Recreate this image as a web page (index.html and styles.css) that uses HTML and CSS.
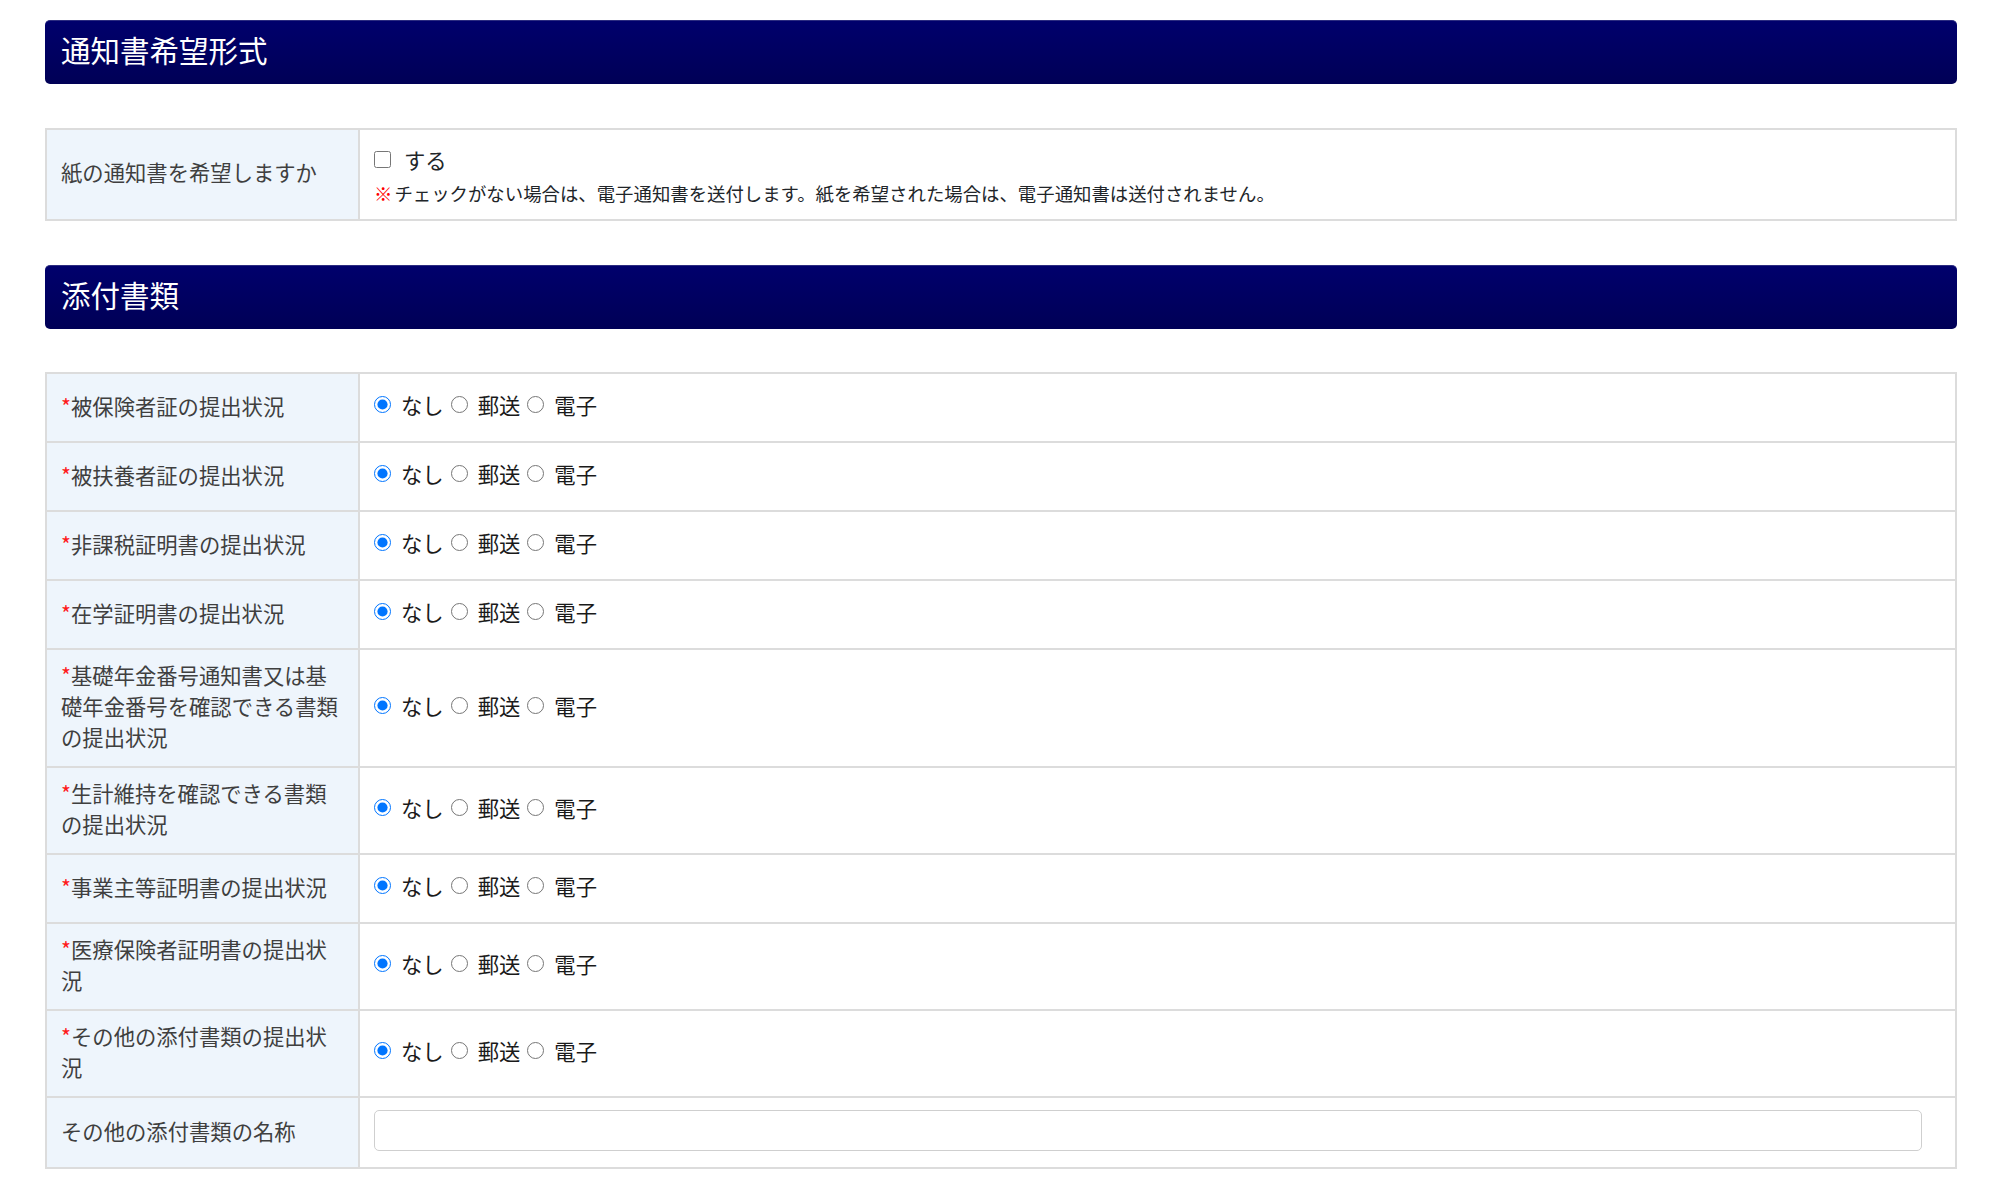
FILE: index.html
```html
<!DOCTYPE html>
<html lang="ja">
<head>
<meta charset="utf-8">
<title>通知書希望形式・添付書類</title>
<link rel="stylesheet" href="styles.css">
</head>
<body>
<div class="page">
  <h2 class="section-title">通知書希望形式</h2>
  <table class="form-table form-table--single">
    <colgroup><col class="col-label"><col></colgroup>
    <tr>
      <th>紙の通知書を希望しますか</th>
      <td>
        <label class="check"><input type="checkbox"><span>する</span></label>
        <p class="note"><span class="mark">※</span>チェックがない場合は、電子通知書を送付します。紙を希望された場合は、電子通知書は送付されません。</p>
      </td>
    </tr>
  </table>

  <h2 class="section-title">添付書類</h2>
  <table class="form-table">
    <colgroup><col class="col-label"><col></colgroup>
    <tr>
      <th><span class="req">*</span>被保険者証の提出状況</th>
      <td><div class="radios"><label><input type="radio" name="a1" checked>なし</label><label><input type="radio" name="a1">郵送</label><label><input type="radio" name="a1">電子</label></div></td>
    </tr>
    <tr>
      <th><span class="req">*</span>被扶養者証の提出状況</th>
      <td><div class="radios"><label><input type="radio" name="a2" checked>なし</label><label><input type="radio" name="a2">郵送</label><label><input type="radio" name="a2">電子</label></div></td>
    </tr>
    <tr>
      <th><span class="req">*</span>非課税証明書の提出状況</th>
      <td><div class="radios"><label><input type="radio" name="a3" checked>なし</label><label><input type="radio" name="a3">郵送</label><label><input type="radio" name="a3">電子</label></div></td>
    </tr>
    <tr>
      <th><span class="req">*</span>在学証明書の提出状況</th>
      <td><div class="radios"><label><input type="radio" name="a4" checked>なし</label><label><input type="radio" name="a4">郵送</label><label><input type="radio" name="a4">電子</label></div></td>
    </tr>
    <tr>
      <th><span class="req">*</span>基礎年金番号通知書又は基礎年金番号を確認できる書類の提出状況</th>
      <td><div class="radios"><label><input type="radio" name="a5" checked>なし</label><label><input type="radio" name="a5">郵送</label><label><input type="radio" name="a5">電子</label></div></td>
    </tr>
    <tr>
      <th><span class="req">*</span>生計維持を確認できる書類の提出状況</th>
      <td><div class="radios"><label><input type="radio" name="a6" checked>なし</label><label><input type="radio" name="a6">郵送</label><label><input type="radio" name="a6">電子</label></div></td>
    </tr>
    <tr>
      <th><span class="req">*</span>事業主等証明書の提出状況</th>
      <td><div class="radios"><label><input type="radio" name="a7" checked>なし</label><label><input type="radio" name="a7">郵送</label><label><input type="radio" name="a7">電子</label></div></td>
    </tr>
    <tr>
      <th><span class="req">*</span>医療保険者証明書の提出状況</th>
      <td><div class="radios"><label><input type="radio" name="a8" checked>なし</label><label><input type="radio" name="a8">郵送</label><label><input type="radio" name="a8">電子</label></div></td>
    </tr>
    <tr>
      <th><span class="req">*</span>その他の添付書類の提出状況</th>
      <td><div class="radios"><label><input type="radio" name="a9" checked>なし</label><label><input type="radio" name="a9">郵送</label><label><input type="radio" name="a9">電子</label></div></td>
    </tr>
    <tr>
      <th>その他の添付書類の名称</th>
      <td><input class="text-input" type="text"></td>
    </tr>
  </table>
</div>
</body>
</html>
```

FILE: styles.css
```css
html, body {
  margin: 0;
  padding: 0;
  background: #ffffff;
}

body {
  font-family: "Noto Sans CJK JP", "Noto Sans", "Liberation Sans", sans-serif;
  font-size: 21.33px;
  color: #212529;
}

.page {
  padding: 20px 43px 40px 45px;
}

.section-title {
  margin: 0 0 44px 0;
  height: 64px;
  box-sizing: border-box;
  display: flex;
  align-items: center;
  padding: 0 16px 7px 16px;
  font-size: 29.5px;
  font-weight: normal;
  color: #ffffff;
  background: linear-gradient(to bottom, #00006c, #000056);
  border-radius: 5px;
  border-top: 1px solid #2c2c80;
}

.section-title + .form-table:not(.form-table--single) {
  margin-top: -1px;
}

.form-table {
  width: 100%;
  table-layout: fixed;
  border-collapse: collapse;
  margin: 0 0 44px 0;
  border: 2px solid #d2d2d2;
}

.col-label {
  width: 313px;
}

.form-table th,
.form-table td {
  border: 2px solid #dcdcdc;
  padding: 9px 14px 14px 14px;
  vertical-align: middle;
  line-height: 31px;
  text-align: left;
}

.form-table th {
  background: #eef5fc;
  color: #3f3f3f;
  font-weight: normal;
}

.form-table td {
  background: #ffffff;
}

.form-table--single td {
  padding: 12px 14px 13px 14px;
}

.form-table--single th {
  padding: 10px 14px 16px 14px;
}

.req {
  color: #ff1a1a;
}

.check {
  display: flex;
  align-items: center;
  height: 35px;
  color: #212529;
}

.check input {
  width: 17px;
  height: 17px;
  margin: 0 13px 0 0;
}

.note {
  margin: 3px 0 0 0;
  font-size: 18.4px;
  line-height: 26px;
  color: #212529;
}

.mark {
  color: #ff0000;
  font-weight: bold;
  margin-right: 2px;
}

.radios {
  display: flex;
  align-items: center;
  min-height: 43px;
  padding-bottom: 1px;
}

.radios label {
  display: inline-flex;
  align-items: center;
  margin-right: 7px;
  color: #1a1a1a;
}

.radios input {
  width: 17px;
  height: 17px;
  margin: 0 10px 0 0;
}

.text-input {
  display: block;
  box-sizing: border-box;
  width: calc(100% - 19px);
  height: 41px;
  margin: 3px 0 2px 0;
  border: 1px solid #cfcfcf;
  border-radius: 5px;
  font-size: 21.33px;
  padding: 0 10px;
}
```
